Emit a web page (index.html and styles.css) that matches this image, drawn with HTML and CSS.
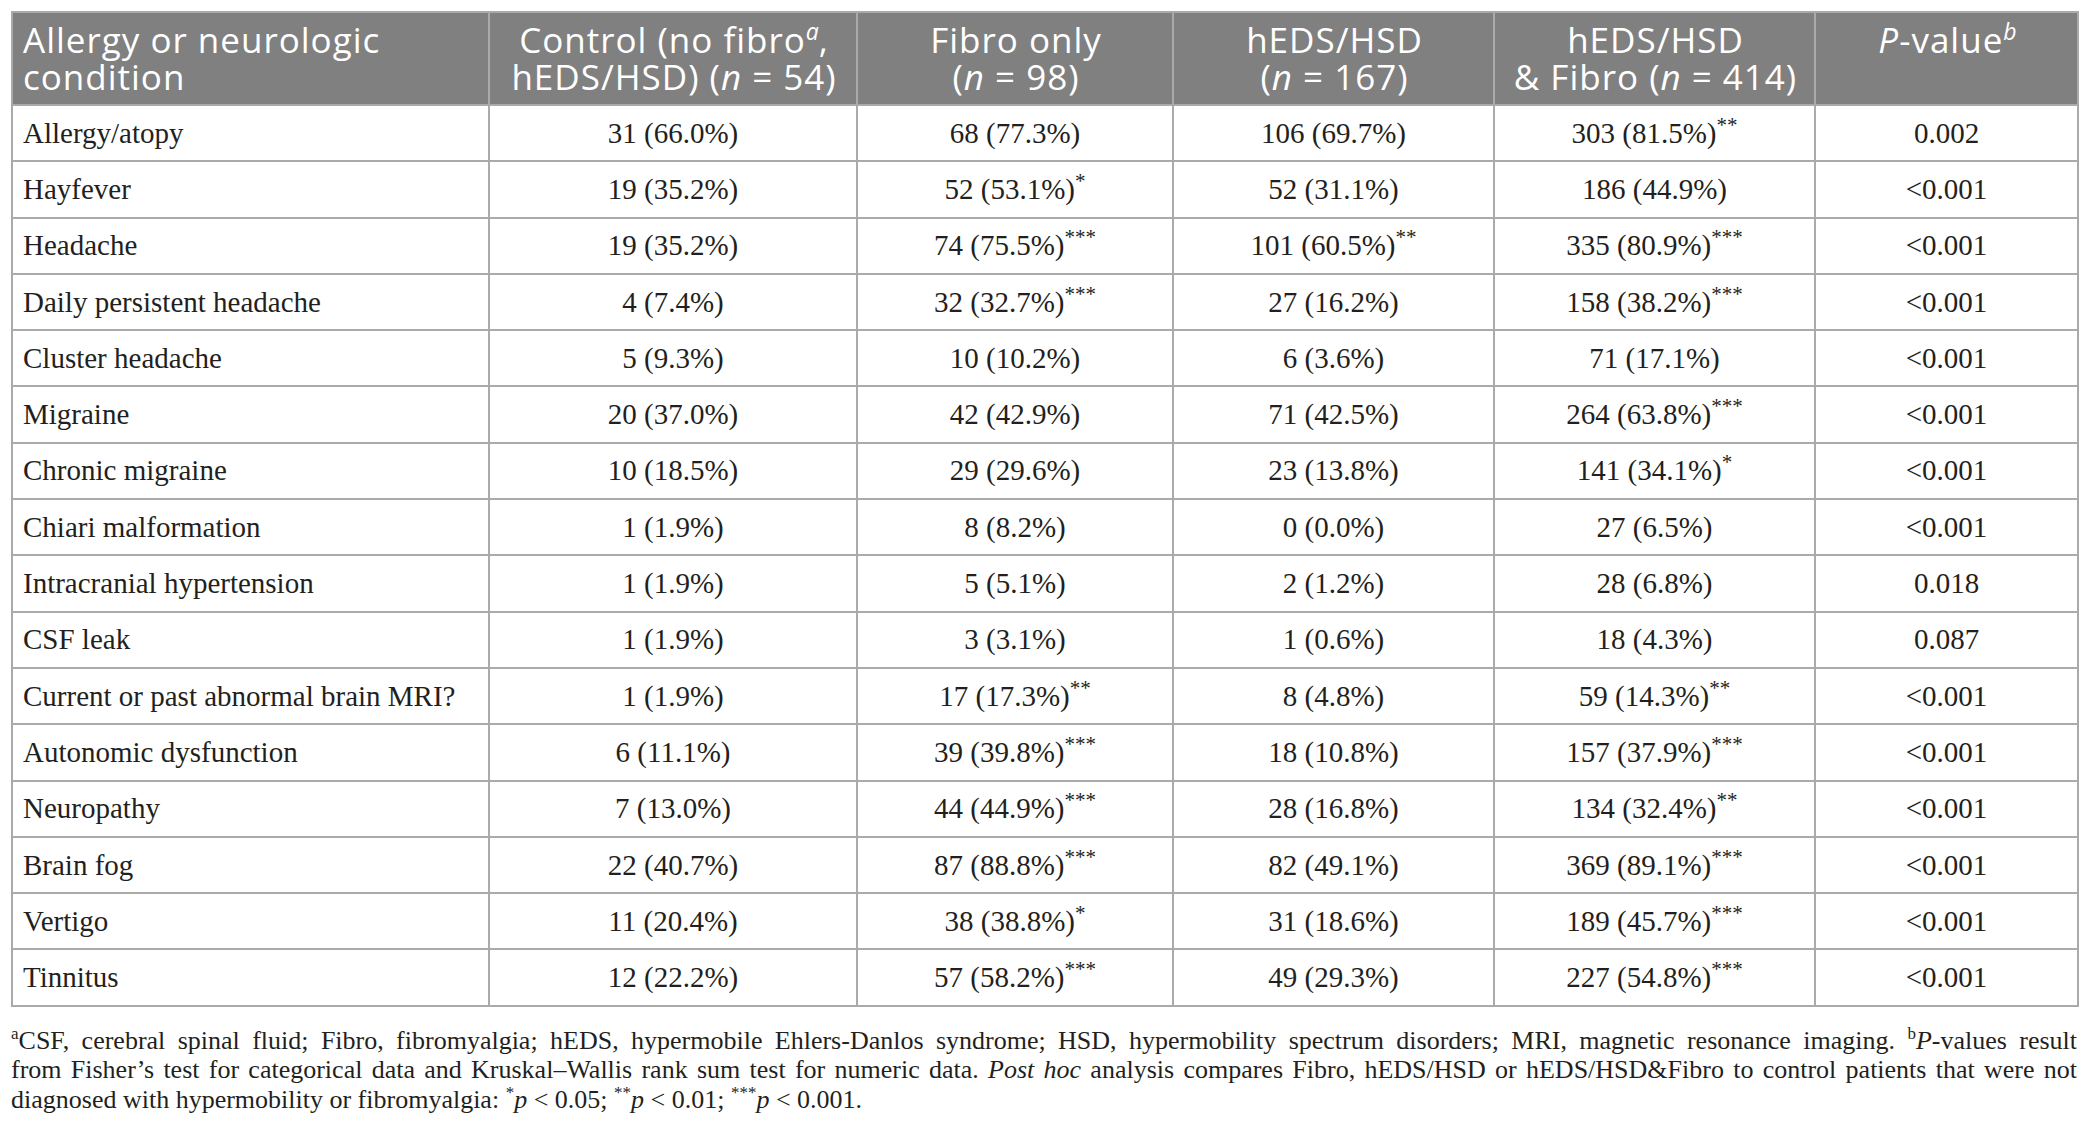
FILE: index.html
```html
<!DOCTYPE html>
<html lang="en">
<head>
    <meta charset="UTF-8">
    <title>Allergy and neurologic conditions</title>
    <link rel="stylesheet" href="styles.css">
</head>
<body>
    <table class="data-table">
        <colgroup>
            <col class="col-name">
            <col class="col-control">
            <col class="col-fibro">
            <col class="col-heds">
            <col class="col-both">
            <col class="col-p">
        </colgroup>
        <thead>
            <tr>
                <th class="first">Allergy or neurologic condition</th>
                <th>Control (no fibro<sup><i>a</i></sup>, hEDS/HSD) (<i>n</i> = 54)</th>
                <th>Fibro only<br>(<i>n</i> = 98)</th>
                <th>hEDS/HSD<br>(<i>n</i> = 167)</th>
                <th>hEDS/HSD<br>&amp; Fibro (<i>n</i> = 414)</th>
                <th><i>P</i>-value<sup><i>b</i></sup></th>
            </tr>
        </thead>
        <tbody>
            <tr><td>Allergy/atopy</td><td>31 (66.0%)</td><td>68 (77.3%)</td><td>106 (69.7%)</td><td>303 (81.5%)<sup>**</sup></td><td>0.002</td></tr>
            <tr><td>Hayfever</td><td>19 (35.2%)</td><td>52 (53.1%)<sup>*</sup></td><td>52 (31.1%)</td><td>186 (44.9%)</td><td>&lt;0.001</td></tr>
            <tr><td>Headache</td><td>19 (35.2%)</td><td>74 (75.5%)<sup>***</sup></td><td>101 (60.5%)<sup>**</sup></td><td>335 (80.9%)<sup>***</sup></td><td>&lt;0.001</td></tr>
            <tr><td>Daily persistent headache</td><td>4 (7.4%)</td><td>32 (32.7%)<sup>***</sup></td><td>27 (16.2%)</td><td>158 (38.2%)<sup>***</sup></td><td>&lt;0.001</td></tr>
            <tr><td>Cluster headache</td><td>5 (9.3%)</td><td>10 (10.2%)</td><td>6 (3.6%)</td><td>71 (17.1%)</td><td>&lt;0.001</td></tr>
            <tr><td>Migraine</td><td>20 (37.0%)</td><td>42 (42.9%)</td><td>71 (42.5%)</td><td>264 (63.8%)<sup>***</sup></td><td>&lt;0.001</td></tr>
            <tr><td>Chronic migraine</td><td>10 (18.5%)</td><td>29 (29.6%)</td><td>23 (13.8%)</td><td>141 (34.1%)<sup>*</sup></td><td>&lt;0.001</td></tr>
            <tr><td>Chiari malformation</td><td>1 (1.9%)</td><td>8 (8.2%)</td><td>0 (0.0%)</td><td>27 (6.5%)</td><td>&lt;0.001</td></tr>
            <tr><td>Intracranial hypertension</td><td>1 (1.9%)</td><td>5 (5.1%)</td><td>2 (1.2%)</td><td>28 (6.8%)</td><td>0.018</td></tr>
            <tr><td>CSF leak</td><td>1 (1.9%)</td><td>3 (3.1%)</td><td>1 (0.6%)</td><td>18 (4.3%)</td><td>0.087</td></tr>
            <tr><td>Current or past abnormal brain MRI?</td><td>1 (1.9%)</td><td>17 (17.3%)<sup>**</sup></td><td>8 (4.8%)</td><td>59 (14.3%)<sup>**</sup></td><td>&lt;0.001</td></tr>
            <tr><td>Autonomic dysfunction</td><td>6 (11.1%)</td><td>39 (39.8%)<sup>***</sup></td><td>18 (10.8%)</td><td>157 (37.9%)<sup>***</sup></td><td>&lt;0.001</td></tr>
            <tr><td>Neuropathy</td><td>7 (13.0%)</td><td>44 (44.9%)<sup>***</sup></td><td>28 (16.8%)</td><td>134 (32.4%)<sup>**</sup></td><td>&lt;0.001</td></tr>
            <tr><td>Brain fog</td><td>22 (40.7%)</td><td>87 (88.8%)<sup>***</sup></td><td>82 (49.1%)</td><td>369 (89.1%)<sup>***</sup></td><td>&lt;0.001</td></tr>
            <tr><td>Vertigo</td><td>11 (20.4%)</td><td>38 (38.8%)<sup>*</sup></td><td>31 (18.6%)</td><td>189 (45.7%)<sup>***</sup></td><td>&lt;0.001</td></tr>
            <tr><td>Tinnitus</td><td>12 (22.2%)</td><td>57 (58.2%)<sup>***</sup></td><td>49 (29.3%)</td><td>227 (54.8%)<sup>***</sup></td><td>&lt;0.001</td></tr>
        </tbody>
    </table>

    <div class="notes">
        <div class="line"><sup>a</sup>CSF, cerebral spinal fluid; Fibro, fibromyalgia; hEDS, hypermobile Ehlers-Danlos syndrome; HSD, hypermobility spectrum disorders; MRI, magnetic resonance imaging. <sup>b</sup><i>P</i>-values result</div>
        <div class="line">from Fisher’s test for categorical data and Kruskal–Wallis rank sum test for numeric data. <i>Post hoc</i> analysis compares Fibro, hEDS/HSD or hEDS/HSD&amp;Fibro to control patients that were not</div>
        <div class="last">diagnosed with hypermobility or fibromyalgia: <sup>*</sup><i>p</i> &lt; 0.05; <sup>**</sup><i>p</i> &lt; 0.01; <sup>***</sup><i>p</i> &lt; 0.001.</div>
    </div>
</body>
</html>
```

FILE: styles.css
```css
body {
    margin: 0;
    padding: 11px 12px 0 11px;
    background: #fff;
    color: #231f20;
    font-family: "Liberation Serif", "Times New Roman", serif;
}
.data-table {
    width: 100%;
    border-collapse: collapse;
    table-layout: fixed;
}
.col-name { width: 477px; }
.col-control { width: 368px; }
.col-fibro { width: 316px; }
.col-heds { width: 321px; }
.col-both { width: 321px; }
.col-p { width: 263px; }

th, td {
    border: 2px solid #aaaaaa;
}
th {
    background-color: #808080;
    color: #fff;
    font-family: "Open Sans", "DejaVu Sans", sans-serif;
    font-weight: 400;
    font-size: 35px;
    letter-spacing: 1px;
    line-height: 37px;
    padding: 8px 8px 8px 10px;
    height: 75px;
    text-align: center;
    vertical-align: top;
}
th.first {
    text-align: left;
}
th sup {
    font-size: 23px;
    line-height: 0;
    letter-spacing: 0;
}
td {
    height: 54.3px;
    padding: 0 10px;
    font-size: 29px;
    text-align: center;
    vertical-align: middle;
}
td:first-child {
    text-align: left;
}
td sup {
    font-size: 21px;
    line-height: 0;
}
.notes {
    margin-top: 19px;
    font-size: 26px;
    line-height: 29.5px;
}
.notes .line {
    white-space: nowrap;
    text-align: justify;
    text-align-last: justify;
}
.notes sup {
    font-size: 17px;
    line-height: 0;
}
```
